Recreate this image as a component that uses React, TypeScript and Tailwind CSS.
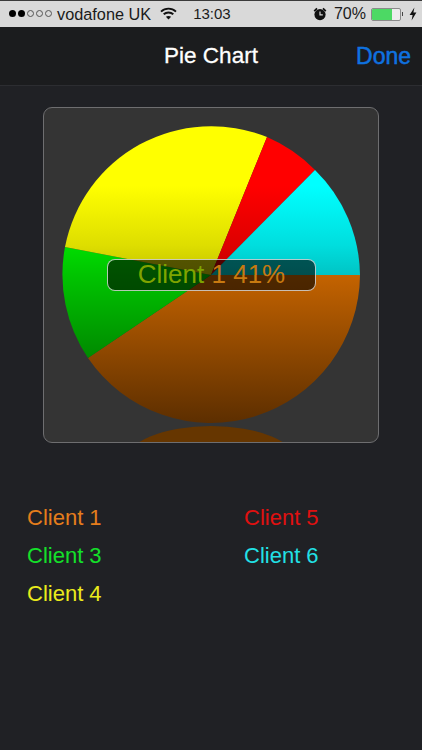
// brightness of the pie from top to bottom
const shade: [number, number][] = [
  [0.2, 1],
  [0.4, 0.87],
  [0.5, 0.77],
  [0.8, 0.52],
  [1, 0.36],
];

// pie centre 149,149 in the svg box, radius 149
const slices = [
  { id: 'orange', rgb: [255, 128, 0], d: 'M149 149 L298 149 A149 149 0 0 1 26 232 Z' },
  { id: 'green', rgb: [0, 255, 0], d: 'M149 149 L26 232 A149 149 0 0 1 3 121 Z' },
  { id: 'yellow', rgb: [255, 255, 0], d: 'M149 149 L3 121 A149 149 0 0 1 205 11 Z' },
  { id: 'red', rgb: [255, 0, 0], d: 'M149 149 L205 11 A149 149 0 0 1 253 44 Z' },
  { id: 'cyan', rgb: [0, 255, 255], d: 'M149 149 L253 44 A149 149 0 0 1 298 149 Z' },
];

function WifiIcon() {
  return (
    <svg width="17" height="13" viewBox="0 0 17 13" className="ml-[9px]" fill="none" stroke="#111" strokeWidth="1.9">
      <path d="M1 4.6 C5.2 0.6 11.8 0.6 16 4.6" />
      <path d="M3.7 7.3 C6.4 4.8 10.6 4.8 13.3 7.3" />
      <path d="M8.5 12.6 L5.9 9.8 C7.4 8.6 9.6 8.6 11.1 9.8 Z" fill="#111" stroke="none" />
    </svg>
  );
}

function AlarmIcon() {
  return (
    <svg width="14" height="14" viewBox="0 0 14 14">
      <circle cx="7" cy="7.6" r="5.6" fill="#111" />
      <path d="M0.6 3.6 L3.4 0.8 L4.6 2 L1.8 4.8 Z M13.4 3.6 L10.6 0.8 L9.4 2 L12.2 4.8 Z" fill="#111" />
      <path d="M7 4.4 V7.8 H9.8" fill="none" stroke="#d9d9d9" strokeWidth="1.2" />
    </svg>
  );
}

function BoltIcon() {
  return (
    <svg width="8" height="14" viewBox="0 0 8 14" className="ml-[6px]">
      <path d="M5.4 0.4 L0.6 8 H3.6 L2.6 13.6 L7.4 5.6 H4.4 Z" fill="#111" />
    </svg>
  );
}

function StatusBar() {
  return (
    <div className="flex h-[27px] items-center justify-between border-t border-[#3a3a3a] bg-[#d9d9d9] pl-[9px] pr-[5px] text-[#1b1b1b]">
      <div className="flex items-center">
        <div className="flex items-center gap-[2px]">
          <span className="h-[7px] w-[7px] rounded-full bg-black" />
          <span className="h-[7px] w-[7px] rounded-full bg-black" />
          <span className="h-[7px] w-[7px] rounded-full border border-[#555]" />
          <span className="h-[7px] w-[7px] rounded-full border border-[#555]" />
          <span className="h-[7px] w-[7px] rounded-full border border-[#555]" />
        </div>
        <span className="ml-[5px] text-[16.3px] leading-none">vodafone UK</span>
        <WifiIcon />
        <span className="ml-[16px] text-[15px] leading-none">13:03</span>
      </div>
      <div className="flex items-center">
        <AlarmIcon />
        <span className="ml-[7px] text-[16px] leading-none">70%</span>
        <div className="ml-[5px] h-[13px] w-[30px] overflow-hidden rounded-[2px] border border-[#8a8a8a] bg-[#ececec]">
          <div className="h-full w-[20px] bg-[#4cd964]" />
        </div>
        <span className="ml-[1px] h-[4px] w-[1px] bg-[#444]" />
        <BoltIcon />
      </div>
    </div>
  );
}

function NavBar() {
  return (
    <div className="relative flex h-[59px] items-center justify-center border-b border-[#2c2d31] bg-[#1b1c1e]">
      <span className="text-[22.5px] text-white [-webkit-text-stroke:0.3px_#fff]">Pie Chart</span>
      <span className="absolute right-[11px] text-[23px] text-[#0f72e0] [-webkit-text-stroke:0.5px_#0f72e0]">Done</span>
    </div>
  );
}

function PieCard() {
  return (
    <div className="relative mx-auto mt-[21px] h-[336px] w-[336px] overflow-hidden rounded-[9px] border border-[#6e6e70] bg-[#343434]">
      <svg width="298" height="336" viewBox="0 0 298 336" className="absolute left-[18px] top-[18px]">
        <defs>
          {slices.map((s) => (
            <linearGradient key={s.id} id={s.id} gradientUnits="userSpaceOnUse" x1="0" y1="0" x2="0" y2="298">
              {shade.map(([at, v]) => (
                <stop
                  key={at}
                  offset={at}
                  stopColor={`rgb(${s.rgb.map((c) => Math.round(c * v)).join(',')})`}
                />
              ))}
            </linearGradient>
          ))}
        </defs>
        {slices.map((s) => (
          <path key={s.id} d={s.d} fill={`url(#${s.id})`} />
        ))}
        <ellipse cx="149" cy="336" rx="86" ry="36" fill="#663600" />
      </svg>
      <div className="absolute left-[63px] top-[151px] flex h-[32px] w-[209px] items-center justify-center rounded-[8px] border border-white/70 bg-black/60 pb-[2px] text-[26px] leading-none">
        <span className="whitespace-pre text-[#7fa400]">Client </span>
        <span className="text-[#c87a10]">1 41%</span>
      </div>
    </div>
  );
}

function Legend() {
  return (
    <div className="mt-[61px] grid grid-cols-[217px_1fr] gap-y-[10px] pl-[27px] text-[22px] leading-[28px]">
      <span className="text-[#e57d1c]">Client 1</span>
      <span className="text-[#e01010]">Client 5</span>
      <span className="text-[#14e02a]">Client 3</span>
      <span className="text-[#22e0e6]">Client 6</span>
      <span className="text-[#eaea1c]">Client 4</span>
    </div>
  );
}

export default function App() {
  return (
    <div className="h-[750px] w-[422px] overflow-hidden bg-[#202125] font-['Liberation_Sans',Arial,sans-serif]">
      <StatusBar />
      <NavBar />
      <PieCard />
      <Legend />
    </div>
  );
}
